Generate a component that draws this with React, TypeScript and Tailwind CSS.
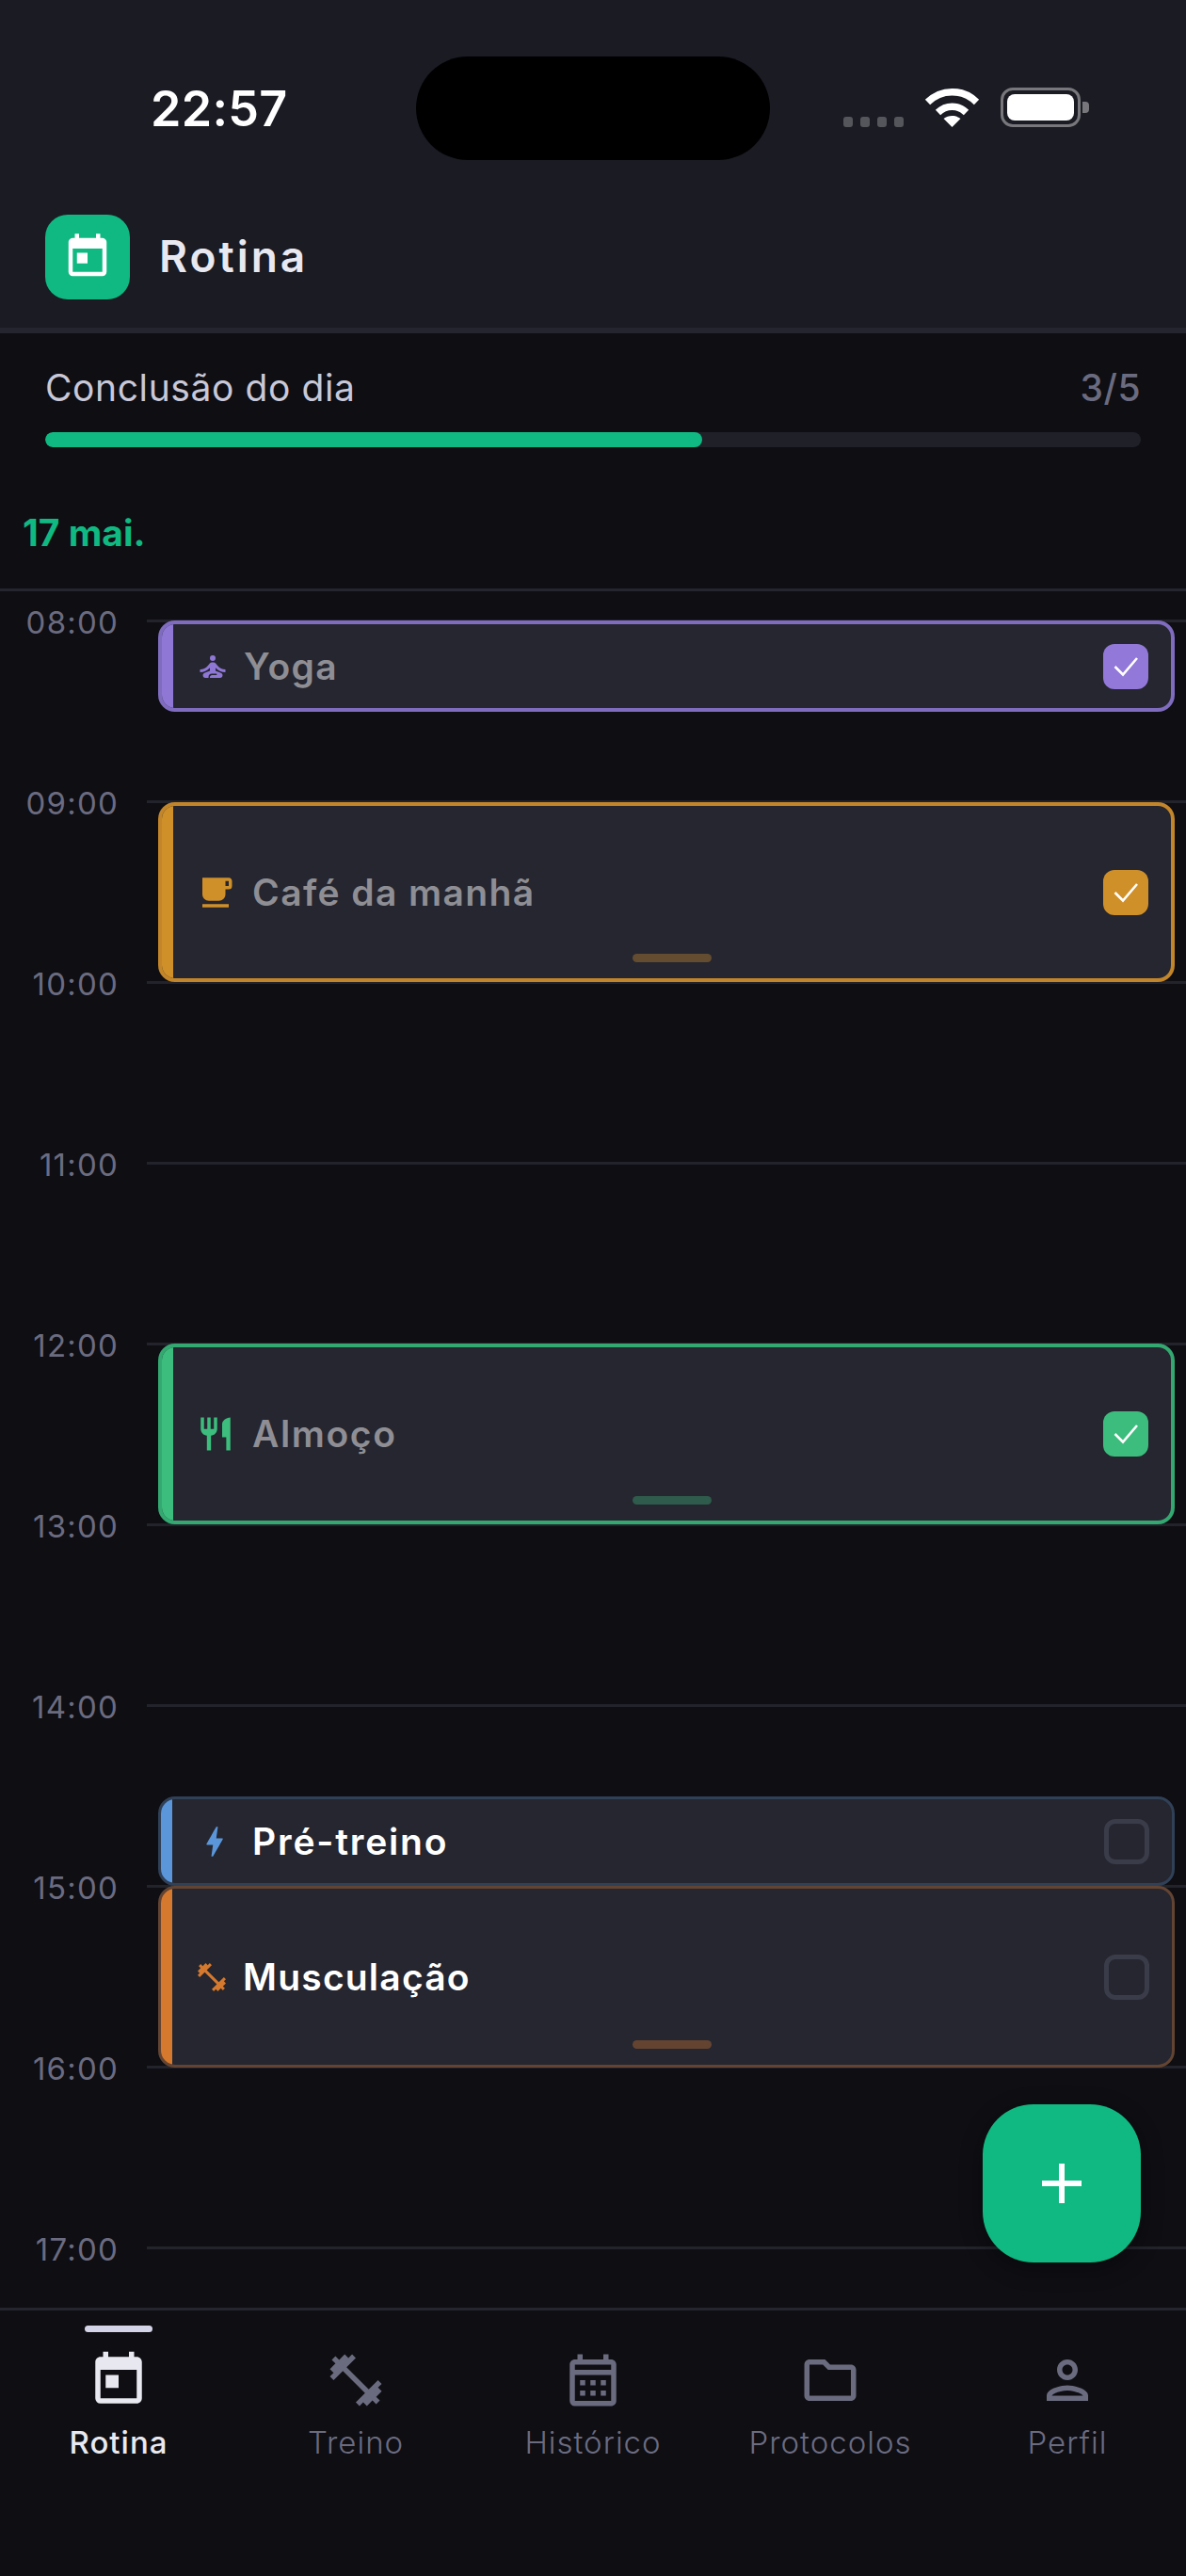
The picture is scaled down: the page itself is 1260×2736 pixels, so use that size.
import React from "react";
import {
  MdToday,
  MdFitnessCenter,
  MdOutlineCalendarMonth,
  MdOutlineFolder,
  MdOutlinePerson,
  MdSelfImprovement,
  MdFreeBreakfast,
  MdRestaurant,
  MdBolt,
} from "react-icons/md";

const hours = ["08:00", "09:00", "10:00", "11:00", "12:00", "13:00", "14:00", "15:00", "16:00", "17:00"];

type Task = {
  name: string;
  Icon: React.ComponentType<{ size?: number; className?: string }>;
  size: number;
  gap: string;
  track: string;
  done: boolean;
  place: string;
  border: string;
  bar: string;
  iconColor: string;
  box: string;
  handle?: string;
};

const tasks: Task[] = [
  { name: "Yoga", Icon: MdSelfImprovement, size: 36, gap: "gap-[15px]", track: "tracking-[1.4px]", done: true, place: "top-[31px] h-[97px]", border: "border-[#7f6cbf]", bar: "bg-[#8f77d6]", iconColor: "text-[#8f77d6]", box: "bg-[#9178d9]" },
  { name: "Café da manhã", Icon: MdFreeBreakfast, size: 42, gap: "gap-[18px]", track: "tracking-[1.4px]", done: true, place: "top-[224px] h-[191px]", border: "border-[#c2852a]", bar: "bg-[#d09029]", iconColor: "text-[#d09029]", box: "bg-[#d09029]", handle: "bg-[#634c30]" },
  { name: "Almoço", Icon: MdRestaurant, size: 42, gap: "gap-[18px]", track: "tracking-[1.6px]", done: true, place: "top-[799px] h-[192px]", border: "border-[#34a871]", bar: "bg-[#3dbd7d]", iconColor: "text-[#3dbd7d]", box: "bg-[#3dbd7d]", handle: "bg-[#2e5b4b]" },
  { name: "Pré-treino", Icon: MdBolt, size: 42, gap: "gap-[19px]", track: "tracking-[1.8px]", done: false, place: "top-[1280px] h-[95px]", border: "border-[#2f4057]", bar: "bg-[#5a96d9]", iconColor: "text-[#5a96d9]", box: "" },
  { name: "Musculação", Icon: MdFitnessCenter, size: 36, gap: "gap-[15px]", track: "tracking-[1.2px]", done: false, place: "top-[1375px] h-[193px]", border: "border-[#634432]", bar: "bg-[#d4792e]", iconColor: "text-[#d4792e]", box: "", handle: "bg-[#644431]" },
];

const nav = [
  { label: "Rotina", Icon: MdToday, active: true },
  { label: "Treino", Icon: MdFitnessCenter, active: false },
  { label: "Histórico", Icon: MdOutlineCalendarMonth, active: false },
  { label: "Protocolos", Icon: MdOutlineFolder, active: false },
  { label: "Perfil", Icon: MdOutlinePerson, active: false },
];

function TaskCard({ t }: { t: Task }) {
  return (
    <div
      className={`absolute left-[168px] right-[12px] flex overflow-hidden rounded-[18px] bg-[#25262f] ${t.place} ${t.border} ${
        t.done ? "border-[4.5px]" : "border-[3px]"
      }`}
    >
      <div className={`w-[12px] shrink-0 ${t.bar}`} />
      <div className={`relative flex flex-1 items-center pl-[24px] pr-[24px] ${t.gap}`}>
        <t.Icon size={t.size} className={`shrink-0 ${t.iconColor}`} />
        <span
          className={`flex-1 text-[39px] font-semibold leading-[48px] ${t.track} ${
            t.done ? "text-[#8e8e94]" : "text-white"
          }`}
        >
          {t.name}
        </span>
        {t.done ? (
          <div className={`flex h-[48px] w-[48px] items-center justify-center rounded-[12px] ${t.box}`}>
            <svg width="48" height="48" viewBox="0 0 48 48" fill="none">
              <path d="M12.5 24 L21 32.5 L36 15" stroke="#fff" strokeWidth="2.6" />
            </svg>
          </div>
        ) : (
          <div className="h-[48px] w-[48px] rounded-[12px] border-[5px] border-[#3b3c49]" />
        )}
        {t.handle && (
          <div className="absolute inset-x-0 bottom-[17px] flex justify-center">
            <div className={`h-[9px] w-[84px] rounded-full ${t.handle}`} />
          </div>
        )}
      </div>
    </div>
  );
}

export default function App() {
  return (
    <div className="relative flex h-[2736px] w-[1260px] flex-col overflow-hidden bg-[#0e0e13] font-['Inter',sans-serif]">
      {/* Header */}
      <header className="relative h-[354px] shrink-0 border-b-[6px] border-[#24252e] bg-[#1a1b23]">
        <div className="absolute left-[442px] top-[60px] h-[110px] w-[376px] rounded-[55px] bg-black" />
        <div className="flex h-[228px] items-start justify-between pl-[160px] pr-[103px] pt-[88px]">
          <span className="text-[52px] font-semibold leading-[56px] tracking-[0.3px] text-white">22:57</span>
          <div className="flex h-[47px] items-end">
            <div className="flex gap-[8px]">
              <span className="h-[11px] w-[10px] rounded-[3px] bg-[#55565c]" />
              <span className="h-[11px] w-[10px] rounded-[3px] bg-[#55565c]" />
              <span className="h-[11px] w-[10px] rounded-[3px] bg-[#55565c]" />
              <span className="h-[11px] w-[10px] rounded-[3px] bg-[#55565c]" />
            </div>
            <svg className="ml-[22px]" width="59" height="42" viewBox="0 0 59 42" fill="none">
              <path d="M3.5 15.5 C18 1 41 1 55.5 15.5" stroke="#fff" strokeWidth="7.5" />
              <path d="M14.5 26.5 C23 18 36 18 44.5 26.5" stroke="#fff" strokeWidth="7.5" />
              <path d="M29.5 42 L20.5 33 C25.5 29 33.5 29 38.5 33 Z" fill="#fff" />
            </svg>
            <div className="ml-[22px] flex items-center">
              <div className="flex h-[42px] w-[85px] items-center justify-center rounded-[13px] border-[3px] border-[#77777c]">
                <div className="h-[28px] w-[71px] rounded-[8px] bg-white" />
              </div>
              <div className="ml-[2px] h-[12px] w-[7px] rounded-r-[4px] bg-[#77777c]" />
            </div>
          </div>
        </div>
        <div className="flex h-[90px] items-center gap-[31px] pl-[48px]">
          <div className="flex h-[90px] w-[90px] items-center justify-center rounded-[24px] bg-[#10b981]">
            <MdToday size={54} className="text-white" />
          </div>
          <span className="pb-[3px] text-[46px] font-semibold leading-[56px] tracking-[3px] text-[#e8e8f0]">Rotina</span>
        </div>
      </header>

      {/* Progress */}
      <section className="shrink-0 px-[48px] pt-[34px]">
        <div className="flex h-[48px] items-center justify-between">
          <span className="text-[39px] font-normal leading-[48px] tracking-[0.6px] text-[#c8c8d8]">Conclusão do dia</span>
          <span className="text-[39px] font-medium leading-[48px] tracking-[0.5px] text-[#6b6b80]">3/5</span>
        </div>
        <div className="mt-[23px] h-[16px] w-full overflow-hidden rounded-full bg-[#1f2028]">
          <div className="h-full w-[60%] rounded-full bg-[#10b981]" />
        </div>
      </section>

      {/* Date */}
      <div className="shrink-0 border-b-[3px] border-[#24252e] pb-[35px] pl-[24px] pt-[67px]">
        <span className="block text-[39px] font-bold leading-[48px] text-[#10b981]">17 mai.</span>
      </div>

      {/* Timeline */}
      <main className="relative flex-1 overflow-hidden pt-[30px]">
        {hours.map((h) => (
          <div key={h} className="flex h-[192px] items-start">
            <span className="w-[126px] text-right text-[33px] font-normal leading-[7px] tracking-[1.2px] text-[#6b6b80]">
              {h}
            </span>
            <div className="ml-[30px] flex-1 border-t-[3px] border-[#22232b]" />
          </div>
        ))}
        {tasks.map((t) => (
          <TaskCard key={t.name} t={t} />
        ))}
        <button className="absolute left-[1044px] top-[1607px] flex h-[168px] w-[168px] items-center justify-center rounded-[54px] bg-[#10b981] shadow-[0_6px_24px_rgba(0,0,0,0.3)]">
          <svg width="42" height="42" viewBox="0 0 42 42" fill="none">
            <path d="M21 0 V42 M0 21 H42" stroke="#fff" strokeWidth="6" />
          </svg>
        </button>
      </main>

      {/* Bottom navigation */}
      <nav className="flex h-[285px] shrink-0 border-t-[3px] border-[#24252e] bg-[#0e0e13]">
        {nav.map(({ label, Icon, active }) => (
          <div key={label} className="relative flex w-[252px] flex-col items-center pt-[41px]">
            {active && <div className="absolute top-[16px] h-[7px] w-[72px] rounded-full bg-[#d4d4e8]" />}
            <Icon size={66} className={active ? "text-[#e8e8f0]" : "text-[#6b6b80]"} />
            <span
              className={`mt-[13px] text-[33px] leading-[40px] tracking-[1px] ${
                active ? "font-medium text-[#e8e8f0]" : "font-light text-[#6b6b80]"
              }`}
            >
              {label}
            </span>
          </div>
        ))}
      </nav>
    </div>
  );
}
